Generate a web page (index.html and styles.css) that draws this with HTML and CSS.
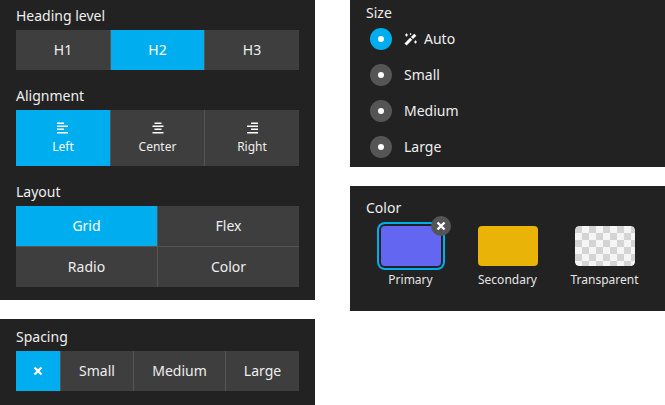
FILE: index.html
```html
<!DOCTYPE html>
<html lang="en">
<head>
  <meta charset="UTF-8">
  <title>Block options</title>
  <link rel="stylesheet" href="styles.css">
</head>
<body>
  <div class="column">
    <section class="panel panel-main">
      <div class="field">
        <div class="label">Heading level</div>
        <div class="buttons cols-3">
          <button class="btn">H1</button>
          <button class="btn active">H2</button>
          <button class="btn">H3</button>
        </div>
      </div>
      <div class="field">
        <div class="label">Alignment</div>
        <div class="buttons cols-3">
          <button class="btn btn-icon active">
            <svg width="12" height="12" viewBox="0 0 12 12"><path d="M0 1.300h7M0 4.200h11M0 7.300h7M0 10.800h11" stroke="#fff" stroke-width="1.500"/></svg>
            Left
          </button>
          <button class="btn btn-icon">
            <svg width="12" height="12" viewBox="0 0 12 12"><path d="M2.500 1.300h7M.5 4.200h11M2.500 7.300h7M.5 10.800h11" stroke="#fff" stroke-width="1.500"/></svg>
            Center
          </button>
          <button class="btn btn-icon">
            <svg width="12" height="12" viewBox="0 0 12 12"><path d="M5 1.300h7M1 4.200h11M5 7.300h7M1 10.800h11" stroke="#fff" stroke-width="1.500"/></svg>
            Right
          </button>
        </div>
      </div>
      <div class="field">
        <div class="label">Layout</div>
        <div class="buttons cols-2">
          <button class="btn active">Grid</button>
          <button class="btn">Flex</button>
          <button class="btn">Radio</button>
          <button class="btn">Color</button>
        </div>
      </div>
    </section>
    <section class="panel panel-spacing">
      <div class="label">Spacing</div>
      <div class="buttons cols-spacing">
        <button class="btn active">
          <svg width="10" height="10" viewBox="0 0 10 10"><path d="M1.500 1.500l7 7M8.500 1.500l-7 7" stroke="#fff" stroke-width="2.400"/></svg>
        </button>
        <button class="btn">Small</button>
        <button class="btn">Medium</button>
        <button class="btn">Large</button>
      </div>
    </section>
  </div>

  <div class="column">
    <section class="panel panel-size">
      <div class="label">Size</div>
      <div class="radios">
        <div class="radio checked">
          <span class="radio-dot"></span>
          <svg class="wand" width="13" height="13" viewBox="0 0 13 13">
            <path d="M1.500 11.500l5.700-5.700" stroke="#fff" stroke-width="3"/>
            <path d="M8 5l3.300-3.300" stroke="#fff" stroke-width="3"/>
            <path d="M2.500 .5v3M1 2h3M11.500 7.500v3M10 9h3" stroke="#fff" stroke-width="1.100"/>
            <path d="M6.500 .3v1.600M5.700 1.100h1.600" stroke="#fff" stroke-width=".8"/>
          </svg>
          Auto
        </div>
        <div class="radio"><span class="radio-dot"></span>Small</div>
        <div class="radio"><span class="radio-dot"></span>Medium</div>
        <div class="radio"><span class="radio-dot"></span>Large</div>
      </div>
    </section>
    <section class="panel panel-color">
      <div class="label">Color</div>
      <div class="swatches">
        <div class="swatch-item">
          <div class="swatch swatch-primary">
            <span class="swatch-clear">
              <svg width="10" height="10" viewBox="0 0 10 10"><path d="M1.500 1.500l7 7M8.500 1.500l-7 7" stroke="#fff" stroke-width="2.400"/></svg>
            </span>
          </div>
          <div class="swatch-name">Primary</div>
        </div>
        <div class="swatch-item">
          <div class="swatch swatch-secondary"></div>
          <div class="swatch-name">Secondary</div>
        </div>
        <div class="swatch-item">
          <svg class="swatch" width="60" height="40" viewBox="0 0 60 40">
            <defs>
              <pattern id="checker" width="14" height="14" patternUnits="userSpaceOnUse">
                <rect width="14" height="14" fill="#f5f5f5"/>
                <rect width="7" height="7" fill="#d4d4d4"/>
                <rect x="7" y="7" width="7" height="7" fill="#d4d4d4"/>
              </pattern>
            </defs>
            <rect width="60" height="40" rx="4" fill="url(#checker)"/>
          </svg>
          <div class="swatch-name">Transparent</div>
        </div>
      </div>
    </section>
  </div>
</body>
</html>
```

FILE: styles.css
```css
html, body {
  height: 100%;
}

body {
  margin: 0;
  background: #fff;
  display: flex;
  gap: 35px;
  overflow: hidden;
  font-family: "Noto Sans", sans-serif;
  font-size: 14px;
  color: #eee;
}

.column {
  width: 315px;
  display: flex;
  flex-direction: column;
}

.panel {
  background: #222;
  padding: 0 16px;
}

.panel-main {
  height: 300px;
  box-sizing: border-box;
  padding-top: 6px;
}

.panel-spacing {
  height: 86px;
  box-sizing: border-box;
  margin-top: 19px;
  padding-top: 8px;
}

.panel-size {
  height: 167px;
  box-sizing: border-box;
  padding-top: 3px;
}

.panel-color {
  height: 125px;
  box-sizing: border-box;
  margin-top: 19px;
  padding-top: 12px;
}

.label {
  height: 20px;
  line-height: 20px;
  margin-bottom: 4px;
}

.field {
  margin-bottom: 16px;
}

.buttons {
  display: grid;
  gap: 1px;
  width: 283px;
  background: #555;
}

.cols-3 {
  grid-template-columns: 94px 93px 94px;
}

.cols-2 {
  grid-template-columns: 141px 141px;
}

.cols-spacing {
  grid-template-columns: 44px 72px 91px 73px;
}

.btn {
  height: 40px;
  box-sizing: border-box;
  padding: 0 0 1px;
  border: 0;
  background: #3e3e3e;
  color: #eee;
  font: inherit;
  display: flex;
  align-items: center;
  justify-content: center;
}

.btn.active {
  background: #00aeef;
  color: #fff;
}

.btn-icon {
  height: 56px;
  padding: 12px 0 0;
  flex-direction: column;
  justify-content: flex-start;
  font-size: 12px;
  line-height: 16px;
  gap: 5px;
}

.radios {
  display: flex;
  flex-direction: column;
  gap: 14px;
  padding-left: 4px;
  margin-top: 5px;
}

.radio {
  height: 22px;
  line-height: 22px;
  display: flex;
  align-items: flex-start;
}

.radio-dot {
  width: 22px;
  height: 22px;
  border-radius: 50%;
  background: #555;
  margin-right: 12px;
  display: flex;
  align-items: center;
  justify-content: center;
}

.radio-dot::after {
  content: "";
  width: 6px;
  height: 6px;
  border-radius: 50%;
  background: #fff;
}

.radio.checked .radio-dot {
  background: #00aeef;
}

.wand {
  margin: 5px 7px 0 0;
}

.swatches {
  display: grid;
  grid-template-columns: repeat(3, 97px);
  margin-left: -4px;
  padding-top: 4px;
}

.swatch-item {
  display: flex;
  flex-direction: column;
  align-items: center;
}

.swatch {
  width: 60px;
  height: 40px;
  margin-left: 1px;
  border-radius: 4px;
}

.swatch-primary {
  position: relative;
  background: #6366f1;
  box-shadow: 0 0 0 2px #222, 0 0 0 4px #00aeef;
}

.swatch-clear {
  position: absolute;
  top: -10px;
  right: -10px;
  width: 20px;
  height: 20px;
  border-radius: 50%;
  background: #555;
  display: flex;
  align-items: center;
  justify-content: center;
}

.swatch-secondary {
  background: #eab308;
}

.swatch-name {
  margin-top: 5px;
  font-size: 12px;
  line-height: 18px;
  color: #e5e5e5;
}
```
